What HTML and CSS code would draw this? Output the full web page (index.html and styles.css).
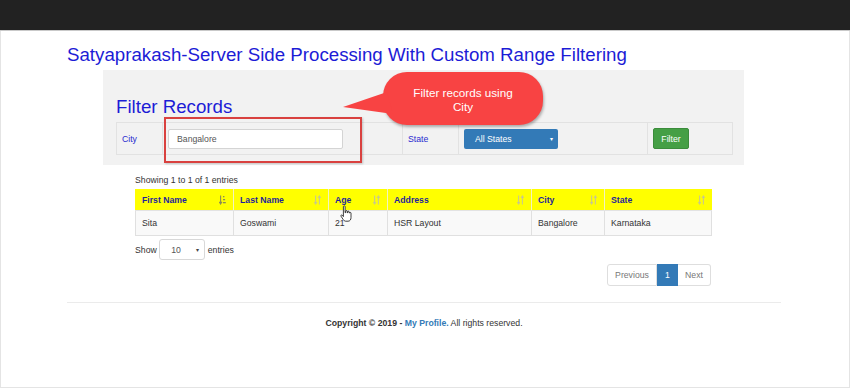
FILE: index.html
```html
<!DOCTYPE html>
<html lang="en">
<head>
<meta charset="utf-8">
<title>Server Side Processing With Custom Range Filtering</title>
<link rel="stylesheet" href="styles.css">
</head>
<body>
<div class="page">
  <div class="navbar"></div>
  <div class="container">
    <h1 class="title">Satyaprakash-Server Side Processing With Custom Range Filtering</h1>
    <div class="well">
      <h2 class="well-title">Filter Records</h2>
      <table class="filter-table">
        <colgroup><col class="c-city"><col class="c-input"><col class="c-state"><col class="c-select"><col class="c-btn"></colgroup>
        <tr>
          <td class="lbl">City</td>
          <td><div class="input">Bangalore</div></td>
          <td class="lbl">State</td>
          <td><div class="select-blue"><span>All States</span><span class="caret">&#9662;</span></div></td>
          <td><div class="btn-green">Filter</div></td>
        </tr>
      </table>
    </div>
    <div class="results">
      <div class="info">Showing 1 to 1 of 1 entries</div>
      <table class="data">
        <colgroup><col class="d1"><col class="d2"><col class="d3"><col class="d4"><col class="d5"><col class="d6"></colgroup>
        <thead>
          <tr>
            <th><div class="th-in"><span>First Name</span><svg class="sort sorted" viewBox="0 0 7 10"><path d="M1.6 0.5v8M0.2 6.8l1.4 2.2 1.4-2.2" stroke="currentColor" fill="none" stroke-width="1.1"/><rect x="4" y="1" width="1.4" height="1.3" fill="currentColor"/><rect x="4" y="4" width="2.1" height="1.3" fill="currentColor"/><rect x="4" y="7" width="2.8" height="1.3" fill="currentColor"/></svg></div></th>
            <th><div class="th-in"><span>Last Name</span><svg class="sort" viewBox="0 0 7 10"><path d="M1.6 0.5v8.3M0.3 7l1.3 2 1.3-2M5.4 9.5v-8.3M4.1 3l1.3-2 1.3 2" stroke="currentColor" fill="none" stroke-width="1.1"/></svg></div></th>
            <th><div class="th-in"><span>Age</span><svg class="sort" viewBox="0 0 7 10"><path d="M1.6 0.5v8.3M0.3 7l1.3 2 1.3-2M5.4 9.5v-8.3M4.1 3l1.3-2 1.3 2" stroke="currentColor" fill="none" stroke-width="1.1"/></svg></div></th>
            <th><div class="th-in"><span>Address</span><svg class="sort" viewBox="0 0 7 10"><path d="M1.6 0.5v8.3M0.3 7l1.3 2 1.3-2M5.4 9.5v-8.3M4.1 3l1.3-2 1.3 2" stroke="currentColor" fill="none" stroke-width="1.1"/></svg></div></th>
            <th><div class="th-in"><span>City</span><svg class="sort" viewBox="0 0 7 10"><path d="M1.6 0.5v8.3M0.3 7l1.3 2 1.3-2M5.4 9.5v-8.3M4.1 3l1.3-2 1.3 2" stroke="currentColor" fill="none" stroke-width="1.1"/></svg></div></th>
            <th><div class="th-in"><span>State</span><svg class="sort" viewBox="0 0 7 10"><path d="M1.6 0.5v8.3M0.3 7l1.3 2 1.3-2M5.4 9.5v-8.3M4.1 3l1.3-2 1.3 2" stroke="currentColor" fill="none" stroke-width="1.1"/></svg></div></th>
          </tr>
        </thead>
        <tbody>
          <tr>
            <td>Sita</td>
            <td>Goswami</td>
            <td>21</td>
            <td>HSR Layout</td>
            <td>Bangalore</td>
            <td>Karnataka</td>
          </tr>
        </tbody>
      </table>
      <div class="length">
        <span>Show</span>
        <div class="select-white"><span>10</span><span class="caret">&#9662;</span></div>
        <span>entries</span>
      </div>
      <div class="pager-row">
        <div class="pager">
          <span class="pg pg-prev">Previous</span>
          <span class="pg pg-active">1</span>
          <span class="pg pg-next">Next</span>
        </div>
      </div>
    </div>
    <div class="rule"></div>
    <footer class="footer"><b>Copyright &copy; 2019 - <span class="link">My Profile.</span></b> All rights reserved.</footer>
  </div>
</div>

<div class="highlight"></div>
<div class="callout">Filter records using<br>City</div>
<svg class="hand" viewBox="0 0 12 18" width="12" height="18"><path d="M3.4 1.6c0-1 1.7-1 1.7 0v6.1l.6-.1V6.3c0-.9 1.6-.9 1.6 0v1.5l.4-.1V6.9c0-.9 1.5-.9 1.5 0v1.2l.3-.1c0-.8 1.5-.8 1.5 0v4.6c0 1.9-1 3.6-2.9 3.6H5.6c-1.1 0-1.7-.6-2.3-1.5L1 11.2c-.5-.8.5-1.6 1.2-1l1.2 1.4z" fill="#fff" stroke="#111" stroke-width=".8" stroke-linejoin="round"/></svg>
</body>
</html>
```

FILE: styles.css
```css
html, body {
  margin: 0;
  padding: 0;
}
body {
  font-family: "Liberation Sans", Arial, sans-serif;
  font-size: 8.7px;
  line-height: 12px;
  color: #333;
  background: #fff;
}
.page {
  width: 850px;
  min-height: 388px;
  box-sizing: border-box;
  border: 1px solid #e4e4e4;
  border-top: 0;
}
.navbar {
  height: 30px;
  margin: 0 -1px;
  background: #222;
  border-bottom: 1px solid #c9c9c9;
}
.container {
  width: 714px;
  margin-left: 66px;
}
.title {
  margin: 12.5px 0 0 0;
  font-size: 18.7px;
  line-height: 22px;
  font-weight: normal;
  color: #1c1cd6;
}
.well {
  margin: 4.5px 0 0 36px;
  width: 641px;
  box-sizing: border-box;
  padding: 25.5px 12px 10px 13px;
  background: #f2f2f2;
}
.well-title {
  margin: 0;
  font-size: 18.7px;
  line-height: 22px;
  font-weight: normal;
  color: #1c1cd6;
}
.filter-table {
  margin-top: 4.5px;
  width: 616px;
  table-layout: fixed;
  border-collapse: collapse;
}
.filter-table td {
  height: 31px;
  padding: 0 5px;
  border: 1px solid #e2e2e2;
  vertical-align: middle;
}
.filter-table td.lbl {
  color: #2b2bd0;
  padding-left: 5px;
}
.c-city { width: 46px; }
.c-input { width: 240px; }
.c-state { width: 56px; }
.c-select { width: 189px; }
.c-btn { width: 85px; }
.input {
  width: 175px;
  height: 20px;
  box-sizing: border-box;
  padding-left: 8px;
  display: flex;
  align-items: center;
  background: #fff;
  border: 1px solid #d4d4d4;
  border-radius: 2px;
  color: #555;
}
.select-blue {
  width: 94px;
  height: 20px;
  box-sizing: border-box;
  display: flex;
  align-items: center;
  justify-content: space-between;
  padding: 0 5px 0 11px;
  background: #337ab7;
  border-radius: 2px;
  color: #fff;
}
.caret {
  font-size: 6px;
}
.btn-green {
  width: 36px;
  height: 21px;
  box-sizing: border-box;
  display: flex;
  align-items: center;
  justify-content: center;
  background: #459f45;
  border: 1px solid #3b8c3b;
  border-radius: 2px;
  color: #fff;
}
.results {
  margin-left: 68px;
  width: 576px;
}
.info {
  margin-top: 9px;
}
.data {
  margin-top: 3px;
  width: 576px;
  table-layout: fixed;
  border-collapse: collapse;
}
.d1 { width: 98px; }
.d2 { width: 95px; }
.d3 { width: 59px; }
.d4 { width: 144px; }
.d5 { width: 73px; }
.d6 { width: 107px; }
.data th {
  height: 21px;
  padding: 0 6px;
  background: #ffff00;
  color: #1f1f9c;
  font-weight: bold;
  text-align: left;
  border-left: 1px solid #f2f2c0;
  border-bottom: 1px solid #e3e3e3;
}
.data th:first-child {
  border-left: 1px solid #ffff00;
}
.th-in {
  display: flex;
  align-items: center;
  justify-content: space-between;
}
.sort {
  width: 7px;
  height: 10px;
  color: #c9c98a;
  margin-right: 1px;
}
.sort.sorted {
  color: #8a8a55;
}
.data td {
  height: 24px;
  padding: 0 6px;
  background: #f9f9f9;
  border: 1px solid #e0e0e0;
}
.length {
  margin-top: 3px;
  display: flex;
  align-items: center;
  gap: 2.5px;
}
.select-white {
  width: 46px;
  height: 21px;
  box-sizing: border-box;
  display: flex;
  align-items: center;
  justify-content: space-between;
  padding: 0 5px 0 11px;
  background: #fff;
  border: 1px solid #d8d8d8;
  border-radius: 3px;
  color: #555;
}
.select-white .caret {
  color: #444;
}
.pager-row {
  margin-top: 4px;
  display: flex;
  justify-content: flex-end;
}
.pager {
  display: flex;
  height: 22px;
}
.pg {
  display: flex;
  align-items: center;
  justify-content: center;
  box-sizing: border-box;
  height: 22px;
  border: 1px solid #dedede;
  color: #777;
  background: #fff;
}
.pg-prev {
  width: 50px;
  border-radius: 3px 0 0 3px;
}
.pg-active {
  width: 21px;
  background: #337ab7;
  border-color: #337ab7;
  color: #fff;
}
.pg-next {
  width: 33px;
  border-left: 0;
  border-radius: 0 3px 3px 0;
}
.rule {
  margin-top: 16px;
  height: 1px;
  background: #ebebeb;
}
.footer {
  margin-top: 13.5px;
  text-align: center;
  color: #333;
}
.footer .link {
  color: #337ab7;
}
.highlight {
  position: absolute;
  left: 164px;
  top: 117px;
  width: 198px;
  height: 46px;
  box-sizing: border-box;
  border: 2px solid #d9413f;
  box-shadow: 1px 1px 2px rgba(0,0,0,0.2);
}
.callout {
  position: absolute;
  left: 383px;
  top: 72px;
  width: 160px;
  height: 53px;
  box-sizing: border-box;
  padding-top: 13.5px;
  border-radius: 24px;
  background: #f84343;
  box-shadow: 1px 2px 3px rgba(0,0,0,0.3);
  color: #fff;
  font-size: 11.7px;
  line-height: 14px;
  text-align: center;
}
.callout::before {
  content: "";
  position: absolute;
  left: -42px;
  top: 17px;
  width: 52px;
  height: 30px;
  background: #f84343;
  clip-path: polygon(2px 18px, 46px 3px, 52px 25px);
}
.hand {
  position: absolute;
  left: 340px;
  top: 205px;
}
```
